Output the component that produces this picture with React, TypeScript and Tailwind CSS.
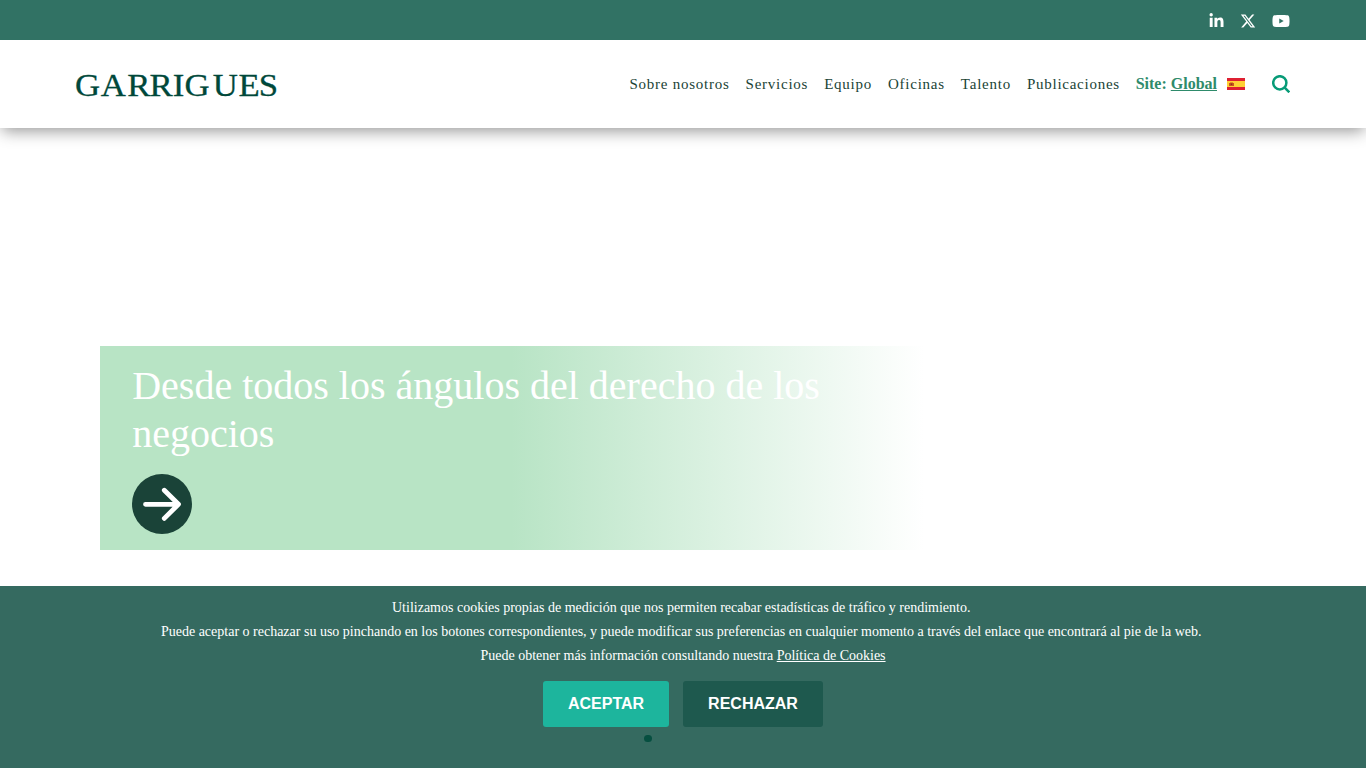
import { FaLinkedinIn, FaYoutube, FaXTwitter } from "react-icons/fa6";

const links = ["Sobre nosotros", "Servicios", "Equipo", "Oficinas", "Talento", "Publicaciones"];

function Logo() {
  return (
    <svg width="206" height="40" viewBox="0 0 206 40" className="shrink-0 overflow-visible" aria-label="Garrigues">
      <text
        transform="scale(1.07 1)"
        x="0 24.1 48.9 69.7 91.4 102.4 128.8 152.7 171.8"
        y="32.3"
        fontSize="32.5"
        fill="#00483a"
        stroke="#00483a"
        strokeWidth="0.3"
        fontFamily="'Liberation Serif', serif"
      >
        GARRIGUES
      </text>
    </svg>
  );
}

function Flag() {
  return (
    <svg width="18" height="12" viewBox="0 0 18 12" className="ml-2.5 shrink-0">
      <rect width="18" height="12" fill="#de2032" />
      <rect y="3" width="18" height="6" fill="#ffd034" />
      <path d="M2 5h1v3h-1zM6 5h1v3h-1zM3 4.5h3v3.5h-3z" fill="#c8551b" />
      <path d="M3.8 5.5h1.4v1.5h-1.4z" fill="#8e2c20" />
    </svg>
  );
}

export default function App() {
  return (
    <div className="flex h-[768px] w-full flex-col overflow-hidden bg-white font-['Liberation_Serif',serif]">
      <div className="z-20 flex h-10 shrink-0 items-center justify-end bg-[#317264] pt-0.5 pr-[76px] text-white">
        <FaLinkedinIn className="mr-[15.7px] h-4 w-[15px]" />
        <FaXTwitter className="mr-4 size-4" />
        <FaYoutube className="h-4 w-[18px]" />
      </div>
      <header className="z-10 flex h-22 shrink-0 items-center justify-between bg-white pr-[76px] pl-[75px] shadow-[0_5px_15px_-2px_rgba(0,0,0,0.42)]">
        <Logo />
        <nav className="flex items-center">
          <div className="mr-[-0.3px] flex gap-4 text-[15px] tracking-[0.75px] text-[#1a4336]">
            {links.map((l) => (
              <a key={l}>{l}</a>
            ))}
          </div>
          <span className="ml-4 text-base font-bold text-[#2e8b6b]">
            Site: <a className="underline">Global</a>
          </span>
          <Flag />
          <svg width="18" height="18" viewBox="0 0 18 18" className="ml-[27px] shrink-0" fill="none" stroke="#079b77" strokeWidth="2.5">
            <circle cx="7.8" cy="7.8" r="6.6" />
            <path d="M12.7 12.7l4.6 4.6" />
          </svg>
        </nav>
      </header>
      <main className="flex grow flex-col items-start justify-end pb-9 pl-[100px]">
        <section className="h-[204px] w-[824px] bg-linear-[to_right,#b8e4c5_50%,#ffffff_100%] pr-9 pl-[32.2px] pt-4">
          <h1 className="text-[40px] leading-12 text-white">Desde todos los ángulos del derecho de los negocios</h1>
          <svg width="60" height="60" viewBox="0 0 60 60" className="mt-4 -ml-[0.2px]" fill="none">
            <circle cx="30" cy="30" r="30" fill="#1a4338" />
            <path d="M13.5 30.3H46M32.3 16.2L46.5 30.3L32.3 44.4" stroke="#fff" strokeWidth="4.8" strokeLinecap="round" strokeLinejoin="round" />
          </svg>
        </section>
      </main>
      <footer className="flex h-[182px] shrink-0 flex-col items-center bg-[#356a60] pt-2.5 text-sm leading-6 text-white">
        <p className="pr-[3.5px]">Utilizamos cookies propias de medición que nos permiten recabar estadísticas de tráfico y rendimiento.</p>
        <p className="pr-[3.5px]">
          Puede aceptar o rechazar su uso pinchando en los botones correspondientes, y puede modificar sus preferencias en cualquier momento a través del enlace que encontrará al pie de la web.
        </p>
        <p>
          Puede obtener más información consultando nuestra <a className="underline">Política de Cookies</a>
        </p>
        <div className="mt-[13px] flex gap-3.5 font-['Liberation_Sans',sans-serif] text-base font-bold">
          <button className="h-[46px] w-[126px] rounded-[3px] bg-[#1db59d]">ACEPTAR</button>
          <button className="h-[46px] w-[140px] rounded-[3px] bg-[#1e594e]">RECHAZAR</button>
        </div>
        <span className="mt-2 mr-[70px] h-[7px] w-2 rounded-full bg-[#064f40]" />
      </footer>
    </div>
  );
}
